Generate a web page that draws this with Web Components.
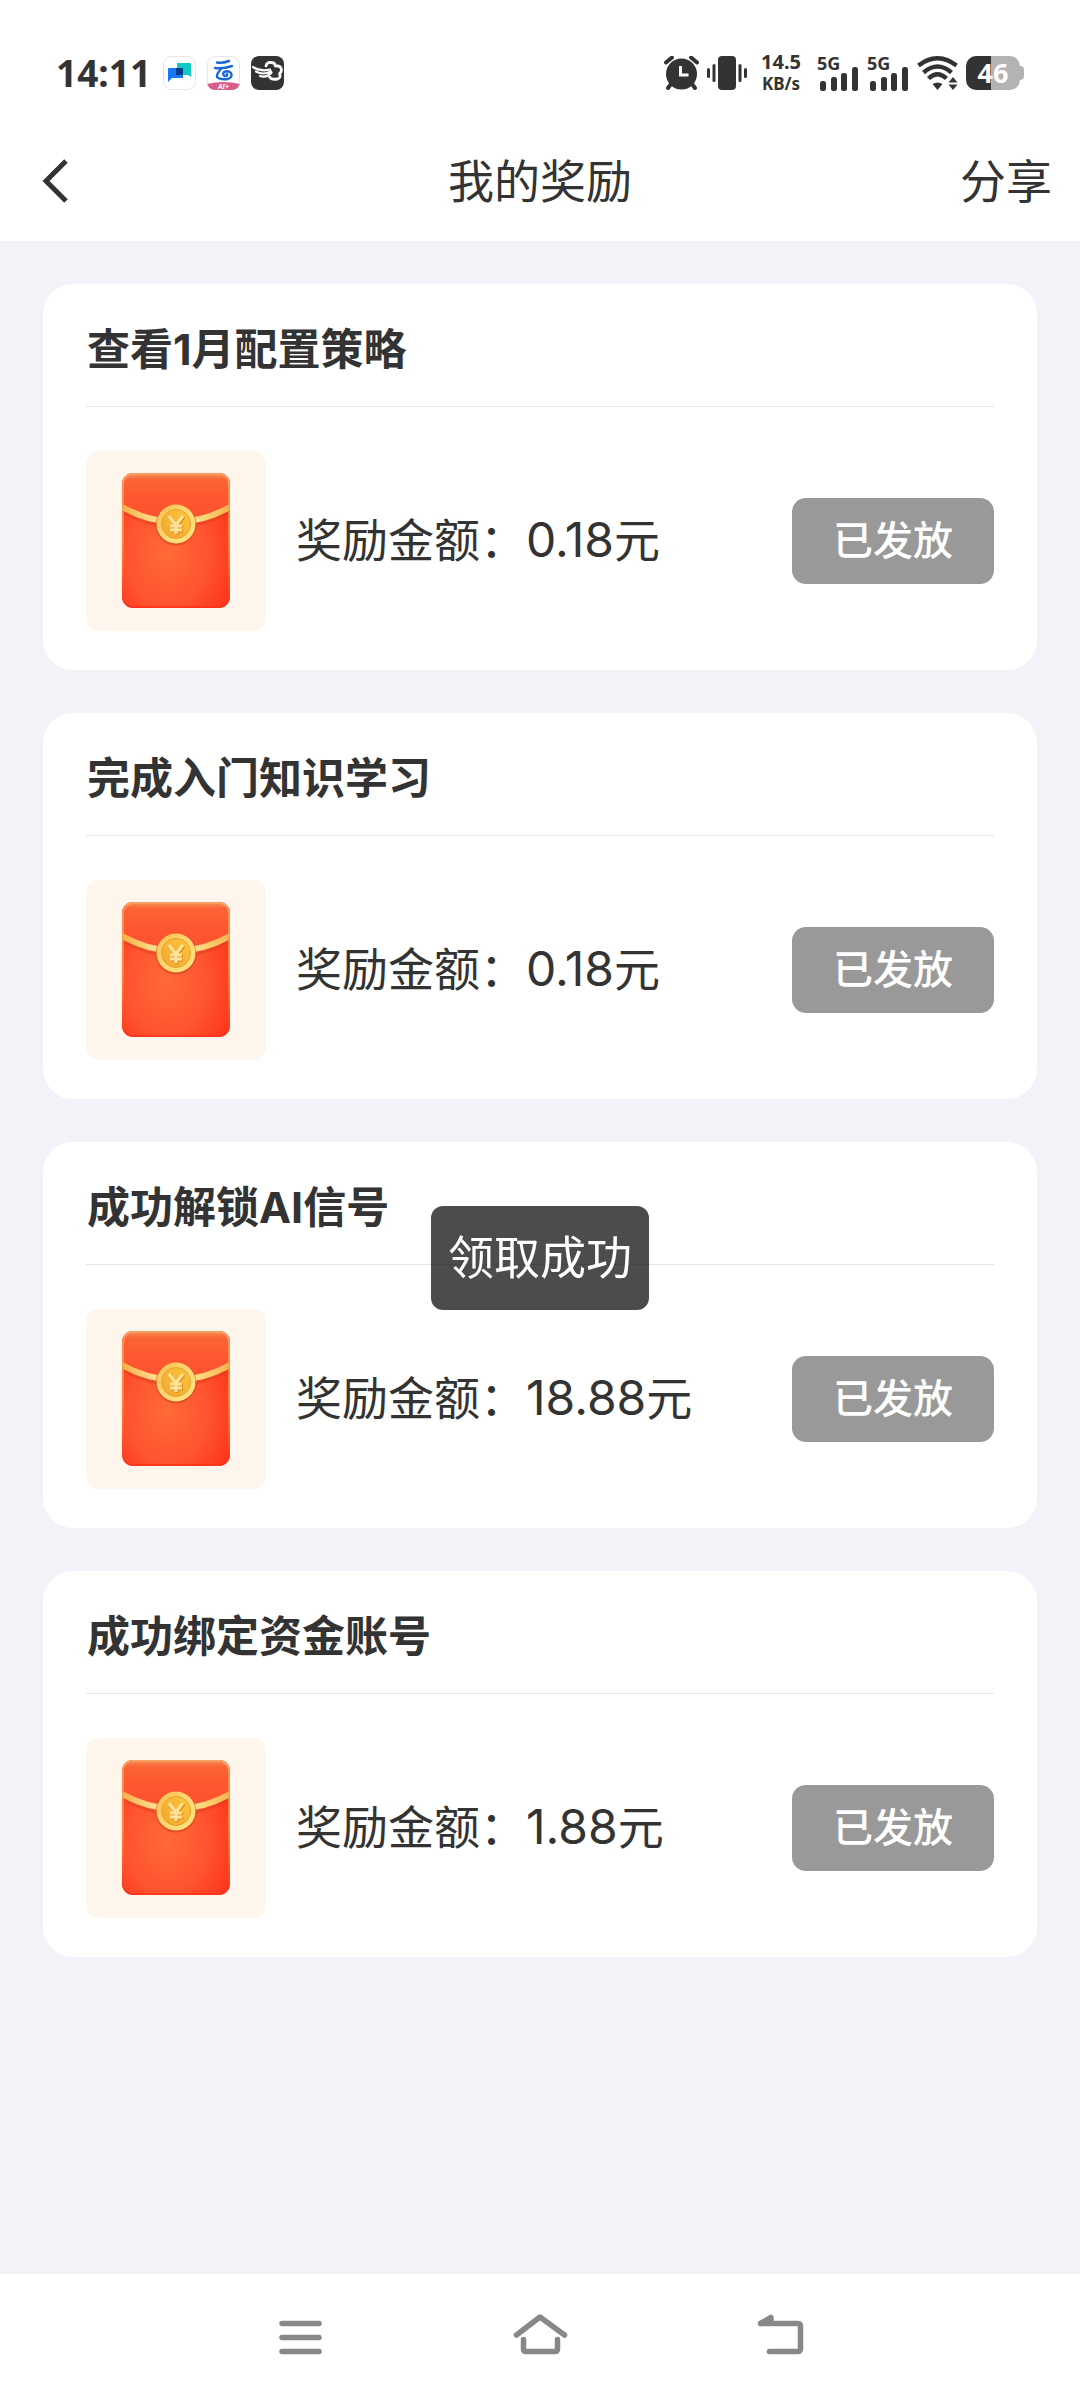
<!DOCTYPE html>
<html lang="zh-CN">
<head>
<meta charset="utf-8">
<meta name="viewport" content="width=device-width, initial-scale=1">
<title>我的奖励</title>
<style>
  html, body { margin: 0; }
  body {
    background: #f2f3f8;
    color: #333;
    font-family: "Noto Sans CJK SC", sans-serif;
  }
</style>
</head>
<body>
<rewards-page>
  <status-bar slot="status" time="14:11" battery="46"></status-bar>
  <nav-header slot="header" action="分享">我的奖励</nav-header>
  <reward-card amount="0.18" status="已发放">查看1月配置策略</reward-card>
  <reward-card amount="0.18" status="已发放">完成入门知识学习</reward-card>
  <reward-card amount="18.88" status="已发放">成功解锁AI信号</reward-card>
  <reward-card amount="1.88" status="已发放">成功绑定资金账号</reward-card>
  <system-nav slot="footer"></system-nav>
  <toast-message slot="toast">领取成功</toast-message>
</rewards-page>

<script>
function define(name, render) {
  customElements.define(name, class extends HTMLElement {
    connectedCallback() {
      if (this.shadowRoot) return;
      this.attachShadow({ mode: "open" }).innerHTML = render(this);
    }
  });
}

define("rewards-page", () => `
  <style>
    :host { display: flex; flex-direction: column; min-height: 100vh; }
    main { flex: 1; display: flex; flex-direction: column; gap: 43px; padding: 43px; }
  </style>
  <slot name="status"></slot>
  <slot name="header"></slot>
  <main><slot></slot></main>
  <slot name="footer"></slot>
  <slot name="toast"></slot>`);

define("signal-meter", () => `
  <style>
    :host { display: flex; flex-direction: column; width: 42px; padding-bottom: 2px; font: 700 18px/18px "Noto Sans", sans-serif; }
    svg { display: block; margin-left: 3px; margin-top: -5px; }
  </style>
  <span>5G</span>
  <svg width="39" height="24" viewBox="0 0 39 24" fill="#333" aria-hidden="true">
    <rect x="0" y="14" width="6" height="10" rx="2.5"/><rect x="11" y="10" width="6" height="14" rx="2.5"/>
    <rect x="21" y="6" width="6" height="18" rx="2.5"/><rect x="32" y="0" width="6" height="24" rx="2.5"/>
  </svg>`);

define("battery-level", el => `
  <style>
    :host { display: flex; align-items: center; }
    .cell {
      width: 54px; height: 34px; border-radius: 10px; text-align: center; color: #fff;
      background: linear-gradient(90deg, #333 46%, #b3b3b3 46%);
      font: 700 27px/34px "Noto Sans", sans-serif;
    }
    .tip { width: 4px; height: 14px; background: #b3b3b3; border-radius: 0 4px 4px 0; }
  </style>
  <span class="cell">${el.getAttribute("level")}</span><span class="tip"></span>`);

define("status-bar", el => `
  <style>
    :host {
      display: flex; justify-content: space-between; align-items: center;
      box-sizing: border-box; height: 121px; padding: 25px 56px 0; background: #fff;
    }
    div { display: flex; align-items: center; }
    svg { display: block; }
    .left { gap: 11px; }
    time { font: 700 37px/40px "Noto Sans", sans-serif; margin-right: 1px; }
    .right { gap: 8px; }
    .speed { flex-direction: column; margin: 0 8px 0 6px; }
    .speed span { font: 700 20px/22px "Noto Sans", sans-serif; }
    .speed span + span { font-size: 17px; }
  </style>
  <div class="left">
    <time>${el.getAttribute("time")}</time>
    <svg width="33" height="34" viewBox="0 0 33 34" aria-hidden="true">
      <rect x=".5" y=".5" width="32" height="33" rx="8" fill="#fff" stroke="#e6e6e6"/>
      <path d="M14 7h13q1 0 1 1v13l-3-2H14z" fill="#12c8c4"/>
      <path d="M6 12h14v10H9l-4 4V13q0-1 1-1z" fill="#1677f2"/>
      <path d="M13 12h7v7h-7z" fill="#033c8c"/>
    </svg>
    <svg width="33" height="34" viewBox="0 0 33 34" aria-hidden="true">
      <defs><clipPath id="app"><rect width="33" height="34" rx="8"/></clipPath></defs>
      <rect x=".5" y=".5" width="32" height="33" rx="8" fill="#fff" stroke="#e6e6e6"/>
      <path clip-path="url(#app)" d="M0 28q16-4 33 0v6H0z" fill="#db5c86"/>
      <g fill="none" stroke="#1b66d8" stroke-width="2.4" stroke-linecap="round">
        <path d="M10 6.500q5 1 12-1.500M8 12q8 1 17-2"/>
        <path d="M15 12q-6 6-5 9 3 3 11 2 5-2 3-6-3-3-7-1-2 3 1 4 3 0 2-2"/>
      </g>
      <text x="16.500" y="33" text-anchor="middle" font-family="Noto Sans" font-size="7" font-weight="700" font-style="italic" fill="#fff">AI+</text>
    </svg>
    <svg width="33" height="34" viewBox="0 0 33 34" aria-hidden="true">
      <rect width="33" height="34" rx="8" fill="#333"/>
      <g fill="none" stroke="#fff" stroke-linecap="round" stroke-linejoin="round">
        <path stroke-width="2.800" d="M15 10q1-4 5-3.500 4 0 4.500 3.500 5.500-.5 6 4 0 2-2 3.500 2 4-2 5.500-6 1-8-2"/>
        <path stroke-width="2.200" d="M2 11q7 5 17 2.500M5 15.500q7 4 15 0M9 20q7 2 11.500-3.500"/>
      </g>
    </svg>
  </div>
  <div class="right">
    <svg width="35" height="34" viewBox="0 0 35 34" aria-hidden="true">
      <circle cx="17.500" cy="18" r="15.500" fill="#333"/>
      <path d="M2 6.500L8 1.500M33 6.500L27 1.500M7 28l-3 4M28 28l3 4" stroke="#333" stroke-width="4" stroke-linecap="round"/>
      <path d="M16.500 10v9h8" fill="none" stroke="#fff" stroke-width="3"/>
    </svg>
    <svg width="40" height="34" viewBox="0 0 40 34" fill="#333" aria-hidden="true">
      <rect x="11" width="18" height="34" rx="4"/>
      <rect x="5.500" y="8" width="3" height="18" rx="1.500"/><rect x="31.500" y="8" width="3" height="18" rx="1.500"/>
      <rect x="0" y="12" width="3" height="10" rx="1.500"/><rect x="37" y="12" width="3" height="10" rx="1.500"/>
    </svg>
    <div class="speed"><span>14.5</span><span>KB/s</span></div>
    <signal-meter></signal-meter>
    <signal-meter></signal-meter>
    <svg width="41" height="34" viewBox="0 0 41 34" aria-hidden="true">
      <g fill="none" stroke="#333" stroke-width="4.400">
        <path d="M1.500 9.500Q20.500-5 39.500 9.500"/><path d="M6.500 16.500Q20.500 4.500 34.500 16.500"/><path d="M11.500 22.500Q20.500 14 29.500 22.500"/>
      </g>
      <path d="M15.500 28q5-3 10 0l-5 6z" fill="#333"/>
      <path d="M36 21l4.500 5.500h-9zM36 34l4.500-5.500h-9z" fill="#333"/>
    </svg>
    <battery-level level="${el.getAttribute("battery")}"></battery-level>
  </div>`);

define("nav-header", el => `
  <style>
    :host {
      display: grid; grid-template-columns: 1fr auto 1fr; align-items: center;
      box-sizing: border-box; height: 120px; padding: 0 28px; background: #fff;
    }
    h1, button { margin: 0; padding: 0 0 6px; font: 400 46px/60px "Noto Sans CJK SC", sans-serif; color: #333; }
    button { border: 0; background: none; }
    .back { justify-self: start; padding: 0 12px; }
    .share { justify-self: end; }
    svg { display: block; }
  </style>
  <button class="back" aria-label="返回">
    <svg width="30" height="44" viewBox="0 0 30 44" fill="none" stroke="#333" stroke-width="5"><path d="M26 2L6 22l20 20"/></svg>
  </button>
  <h1><slot></slot></h1>
  <button class="share">${el.getAttribute("action")}</button>`);

define("red-packet", () => `
  <style>
    :host { display: block; flex: none; border-radius: 13px; background: #fef6ec; }
    svg { display: block; }
  </style>
  <svg width="180" height="180" viewBox="0 0 180 180" aria-hidden="true">
    <defs>
      <radialGradient id="body" cx=".42" cy=".6" r=".75">
        <stop offset="0" stop-color="#ff6a38"/><stop offset=".5" stop-color="#ff5430"/><stop offset="1" stop-color="#fb2c16"/>
      </radialGradient>
      <linearGradient id="flap" x2="0" y2="1">
        <stop offset="0" stop-color="#f59458"/><stop offset=".13" stop-color="#fb6436"/><stop offset=".5" stop-color="#ff5731"/><stop offset="1" stop-color="#fb5130"/>
      </linearGradient>
      <linearGradient id="edge" x2="0" y2="1">
        <stop offset="0" stop-color="#f7a265"/><stop offset=".5" stop-color="#ff9a3e"/><stop offset="1" stop-color="#fb3018"/>
      </linearGradient>
      <linearGradient id="band"><stop offset="0" stop-color="#f5ad42"/><stop offset=".3" stop-color="#ffdc8a"/><stop offset=".7" stop-color="#ffdb80"/><stop offset="1" stop-color="#f4b048"/></linearGradient>
      <linearGradient id="ring" x2="1" y2="1"><stop offset="0" stop-color="#f7bd4e"/><stop offset=".5" stop-color="#ffd873"/><stop offset="1" stop-color="#ffe27e"/></linearGradient>
      <linearGradient id="coin" x1="1" x2="0" y2="1"><stop offset="0" stop-color="#fdc63a"/><stop offset="1" stop-color="#f3a531"/></linearGradient>
      <clipPath id="shape"><rect x="36" y="22" width="108" height="135" rx="11"/></clipPath>
    </defs>
    <g clip-path="url(#shape)">
      <rect x="36" y="22" width="108" height="135" fill="url(#body)"/>
      <path d="M36 22h108v33Q90 92 36 55z" fill="url(#flap)"/>
      <path d="M34 57Q90 91 146 57" fill="none" stroke="#d93d1c" stroke-opacity=".5" stroke-width="7"/>
      <path d="M34 55Q90 87 146 55" fill="none" stroke="url(#band)" stroke-width="6"/>
    </g>
    <rect x="37" y="23" width="106" height="133" rx="10" fill="none" stroke="url(#edge)" stroke-width="1.500"/>
    <circle cx="90" cy="74" r="20.500" fill="#c9451c" opacity=".6"/>
    <circle cx="90" cy="73" r="19.500" fill="url(#ring)"/>
    <circle cx="90" cy="73" r="14.500" fill="url(#coin)" stroke="#e8a02c" stroke-width="1"/>
    <g fill="none" stroke-width="3">
      <path d="M84 66l7 9 7-9M91 75v9M85 76h12M85 80h12" stroke="#d98c20"/>
      <path d="M83 65l7 9 7-9M90 74v9M84 75h12M84 79h12" stroke="#ffe49a"/>
    </g>
  </svg>`);

define("reward-card", el => `
  <style>
    :host { display: block; padding: 0 43px 39px; border-radius: 30px; background: #fff; }
    h2 { margin: 0; padding: 35px 1px 27px; border-bottom: 1px solid #e6e6e6; font: 700 43px/60px Inter, "Noto Sans CJK SC", sans-serif; }
    .row { display: flex; align-items: center; gap: 30px; padding-top: 44px; }
    p { flex: 1; margin: 0; padding-bottom: 6px; font-size: 46px; line-height: 60px; }
    .value { font-family: Inter, sans-serif; font-size: 48px; }
    button {
      box-sizing: border-box; height: 86px; padding: 0 41px 6px; border: 0; border-radius: 14px;
      background: #999; color: #fff; font: 500 40px/60px "Noto Sans CJK SC", sans-serif;
    }
  </style>
  <h2><slot></slot></h2>
  <div class="row">
    <red-packet></red-packet>
    <p>奖励金额\uFF1A<span class="value">${el.getAttribute("amount")}</span>元</p>
    <button disabled>${el.getAttribute("status")}</button>
  </div>`);

define("toast-message", () => `
  <style>
    :host { position: fixed; inset: 116px 0 0; display: grid; place-items: center; pointer-events: none; }
    output { padding: 18px 17px 26px; border-radius: 12px; background: rgba(0, 0, 0, .7); color: #fff; font-size: 46px; line-height: 60px; }
  </style>
  <output><slot></slot></output>`);

define("system-nav", () => `
  <style>
    :host { display: block; background: #fff; }
    nav { display: flex; justify-content: center; align-items: center; gap: 180px; height: 126px; }
    button { padding: 0; border: 0; background: none; }
    svg { display: block; fill: none; stroke: #888; stroke-width: 5.500; stroke-linecap: round; stroke-linejoin: round; }
  </style>
  <nav>
    <button aria-label="最近任务"><svg width="60" height="60" viewBox="0 0 60 60"><path d="M12 16.500h37M12 30.500h37M12 44.500h37"/></svg></button>
    <button aria-label="主屏幕"><svg width="60" height="60" viewBox="0 0 60 60"><path d="M6.500 28L30 10l24.500 18M13.500 32.500V42q0 2.500 3 2.500h28q3 0 3-2.500V32.500"/></svg></button>
    <button aria-label="返回"><svg width="60" height="60" viewBox="0 0 60 60"><path d="M10.500 16.500h37q3 0 3 3v22q0 3-3 3H19.500M10.500 16.500l10.500-6v6"/></svg></button>
  </nav>`);
</script>
</body>
</html>
